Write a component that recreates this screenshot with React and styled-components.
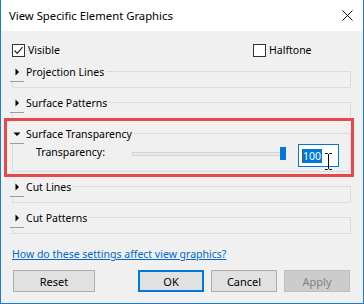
import React from "react";
import styled, { createGlobalStyle } from "styled-components";

const GlobalStyle = createGlobalStyle`
  html, body {
    margin: 0;
    padding: 0;
    background: #ffffff;
  }
  body {
    font-family: "Noto Sans", "Liberation Sans", sans-serif;
    font-size: 10.5px;
    color: #000;
  }
`;

const sections = [
  { id: "projection", title: "Projection Lines" },
  { id: "patterns", title: "Surface Patterns" },
  { id: "transparency", title: "Surface Transparency", open: true },
  { id: "cutLines", title: "Cut Lines" },
  { id: "cutPatterns", title: "Cut Patterns" },
];

const CheckIcon = () => (
  <svg width="11" height="11" viewBox="0 0 11 11">
    <path d="M1.5 5.5 L4.2 8.3 L9.6 2.2" fill="none" stroke="#222" strokeWidth="1.2" />
  </svg>
);

const Arrow = ({ open }) => (
  <svg width="8" height="8" viewBox="0 0 8 8">
    {open ? <path d="M0.5 2.5 H7.5 L4 6 Z" fill="#000" /> : <path d="M2.5 0.5 V7.5 L6 4 Z" fill="#000" />}
  </svg>
);

const Section = ({ title, open, children }) => (
  <SectionBox>
    <Header>
      <Expander>
        <Arrow open={open} />
      </Expander>
      <HeaderLabel>{title}</HeaderLabel>
      <Rule />
    </Header>
    <Content>{children}</Content>
  </SectionBox>
);

const App = () => {
  return (
    <>
      <GlobalStyle />
      <Window>
        <TitleBar>
          <span>View Specific Element Graphics</span>
          <svg width="11" height="11" viewBox="0 0 11 11">
            <path d="M0.5 0.5 L10.5 10.5 M10.5 0.5 L0.5 10.5" stroke="#111" strokeWidth="1" />
          </svg>
        </TitleBar>
        <Body>
          <CheckRow>
            <CheckLabel>
              <Box>
                <CheckIcon />
              </Box>
              Visible
            </CheckLabel>
            <CheckLabel>
              <Box />
              Halftone
            </CheckLabel>
          </CheckRow>
          <SectionList>
            {sections.map((s) =>
              s.open ? (
                <Highlight key={s.id}>
                  <Section title={s.title} open>
                    <FieldRow>
                      <FieldLabel>Transparency:</FieldLabel>
                      <Slider>
                        <Track />
                        <Thumb />
                      </Slider>
                      <TextBox>
                        <Caret />
                        <Selected>100</Selected>
                        <IBeam width="9" height="17" viewBox="0 0 9 17">
                          <path
                            d="M1 0.5 H3.5 L4.5 1.5 L5.5 0.5 H8 M4.5 1.5 V15.5 M1 16.5 H3.5 L4.5 15.5 L5.5 16.5 H8"
                            fill="none"
                            stroke="#000"
                            strokeWidth="1"
                          />
                        </IBeam>
                      </TextBox>
                    </FieldRow>
                  </Section>
                </Highlight>
              ) : (
                <Section key={s.id} title={s.title} />
              )
            )}
          </SectionList>
          <HelpLink href="#">How do these settings affect view graphics?</HelpLink>
          <ButtonRow>
            <Button $wide>Reset</Button>
            <ButtonGroup>
              <Button $primary>OK</Button>
              <Button>Cancel</Button>
              <Button disabled>Apply</Button>
            </ButtonGroup>
          </ButtonRow>
        </Body>
      </Window>
    </>
  );
};

export default App;

const Window = styled.div`
  width: 364px;
  height: 304px;
  box-sizing: border-box;
  border: 1px solid #1c7bd2;
  border-top: none;
  background: #f0f0f0;
  display: flex;
  flex-direction: column;
`;

const TitleBar = styled.div`
  height: 31px;
  flex-shrink: 0;
  background: #ffffff;
  display: flex;
  align-items: center;
  justify-content: space-between;
  padding: 0 10px 0 8px;
  font-size: 11.3px;
`;

const Body = styled.div`
  flex: 1;
  display: flex;
  flex-direction: column;
  padding: 13px 12px 0 11px;
`;

const CheckRow = styled.div`
  display: grid;
  grid-template-columns: 241px 1fr;
  height: 13px;
`;

const CheckLabel = styled.label`
  display: flex;
  align-items: center;
  gap: 3px;
  line-height: 13px;
`;

const Box = styled.span`
  width: 13px;
  height: 13px;
  box-sizing: border-box;
  border: 1px solid #333;
  background: #fff;
  display: flex;
  align-items: center;
  justify-content: center;
`;

const SectionList = styled.div`
  display: flex;
  flex-direction: column;
  gap: 7px;
  margin-top: 7px;
`;

const SectionBox = styled.div`
  display: flex;
  flex-direction: column;
`;

const Header = styled.div`
  display: flex;
  height: 18px;
`;

const Expander = styled.span`
  width: 14px;
  margin-left: -2px;
  box-sizing: border-box;
  border-bottom: 1px solid #9a9a9a;
  display: flex;
  align-items: center;
  justify-content: center;
  padding-bottom: 2px;
`;

const HeaderLabel = styled.span`
  line-height: 16px;
  padding: 0 2px;
  white-space: nowrap;
`;

const Rule = styled.span`
  flex: 1;
  margin-top: 7px;
  border-top: 1px solid #dcdcdc;
  border-right: 1px solid #dcdcdc;
`;

const Content = styled.div`
  min-height: 5px;
  border: 1px solid #dcdcdc;
  border-top: none;
`;

const Highlight = styled.div`
  position: relative;

  &::after {
    content: "";
    position: absolute;
    top: -8px;
    left: -8px;
    right: -3px;
    bottom: -5px;
    border: 3px solid #e5494c;
    pointer-events: none;
  }
`;

const FieldRow = styled.div`
  display: flex;
  align-items: flex-start;
  height: 27px;
  padding-left: 23px;
`;

const FieldLabel = styled.span`
  width: 96px;
  line-height: 16px;
`;

const Slider = styled.div`
  position: relative;
  width: 154px;
  height: 13px;
  margin-top: 3px;
  display: flex;
  align-items: center;
`;

const Track = styled.div`
  width: 150px;
  height: 4px;
  box-sizing: border-box;
  background: #e7eaea;
  border: 1px solid #d6d6d6;
`;

const Thumb = styled.div`
  position: absolute;
  right: 0;
  top: 0;
  width: 6px;
  height: 13px;
  background: #0078d7;
`;

const TextBox = styled.div`
  position: relative;
  margin-left: 12px;
  width: 41px;
  height: 23px;
  box-sizing: border-box;
  border: 1px solid #0078d7;
  background: #fff;
  display: flex;
  align-items: center;
  padding-left: 3px;
`;

const Caret = styled.span`
  width: 1px;
  height: 14px;
  background: #555;
`;

const Selected = styled.span`
  background: #0078d7;
  color: #fff;
  line-height: 14px;
  padding: 0 1px 0 0;
`;

const IBeam = styled.svg`
  position: absolute;
  left: 25px;
  top: 8px;
`;

const HelpLink = styled.a`
  margin-top: 12px;
  line-height: 16px;
  color: #0066cc;
  text-decoration: underline;
  align-self: flex-start;
`;

const ButtonRow = styled.div`
  display: flex;
  margin-top: 8px;
  padding-left: 1px;
  padding-right: 1px;
`;

const ButtonGroup = styled.div`
  display: flex;
  gap: 7px;
  margin-left: auto;
`;

const Button = styled.button`
  width: ${(p) => (p.$wide ? "82px" : "66px")};
  height: 22px;
  box-sizing: border-box;
  font-family: inherit;
  font-size: 11px;
  padding: 0;
  background: #e1e1e1;
  border: ${(p) => (p.$primary ? "2px solid #0078d7" : "1px solid #adadad")};
  color: #000;

  &:disabled {
    background: #cccccc;
    border-color: #bfbfbf;
    color: #838383;
  }
`;
